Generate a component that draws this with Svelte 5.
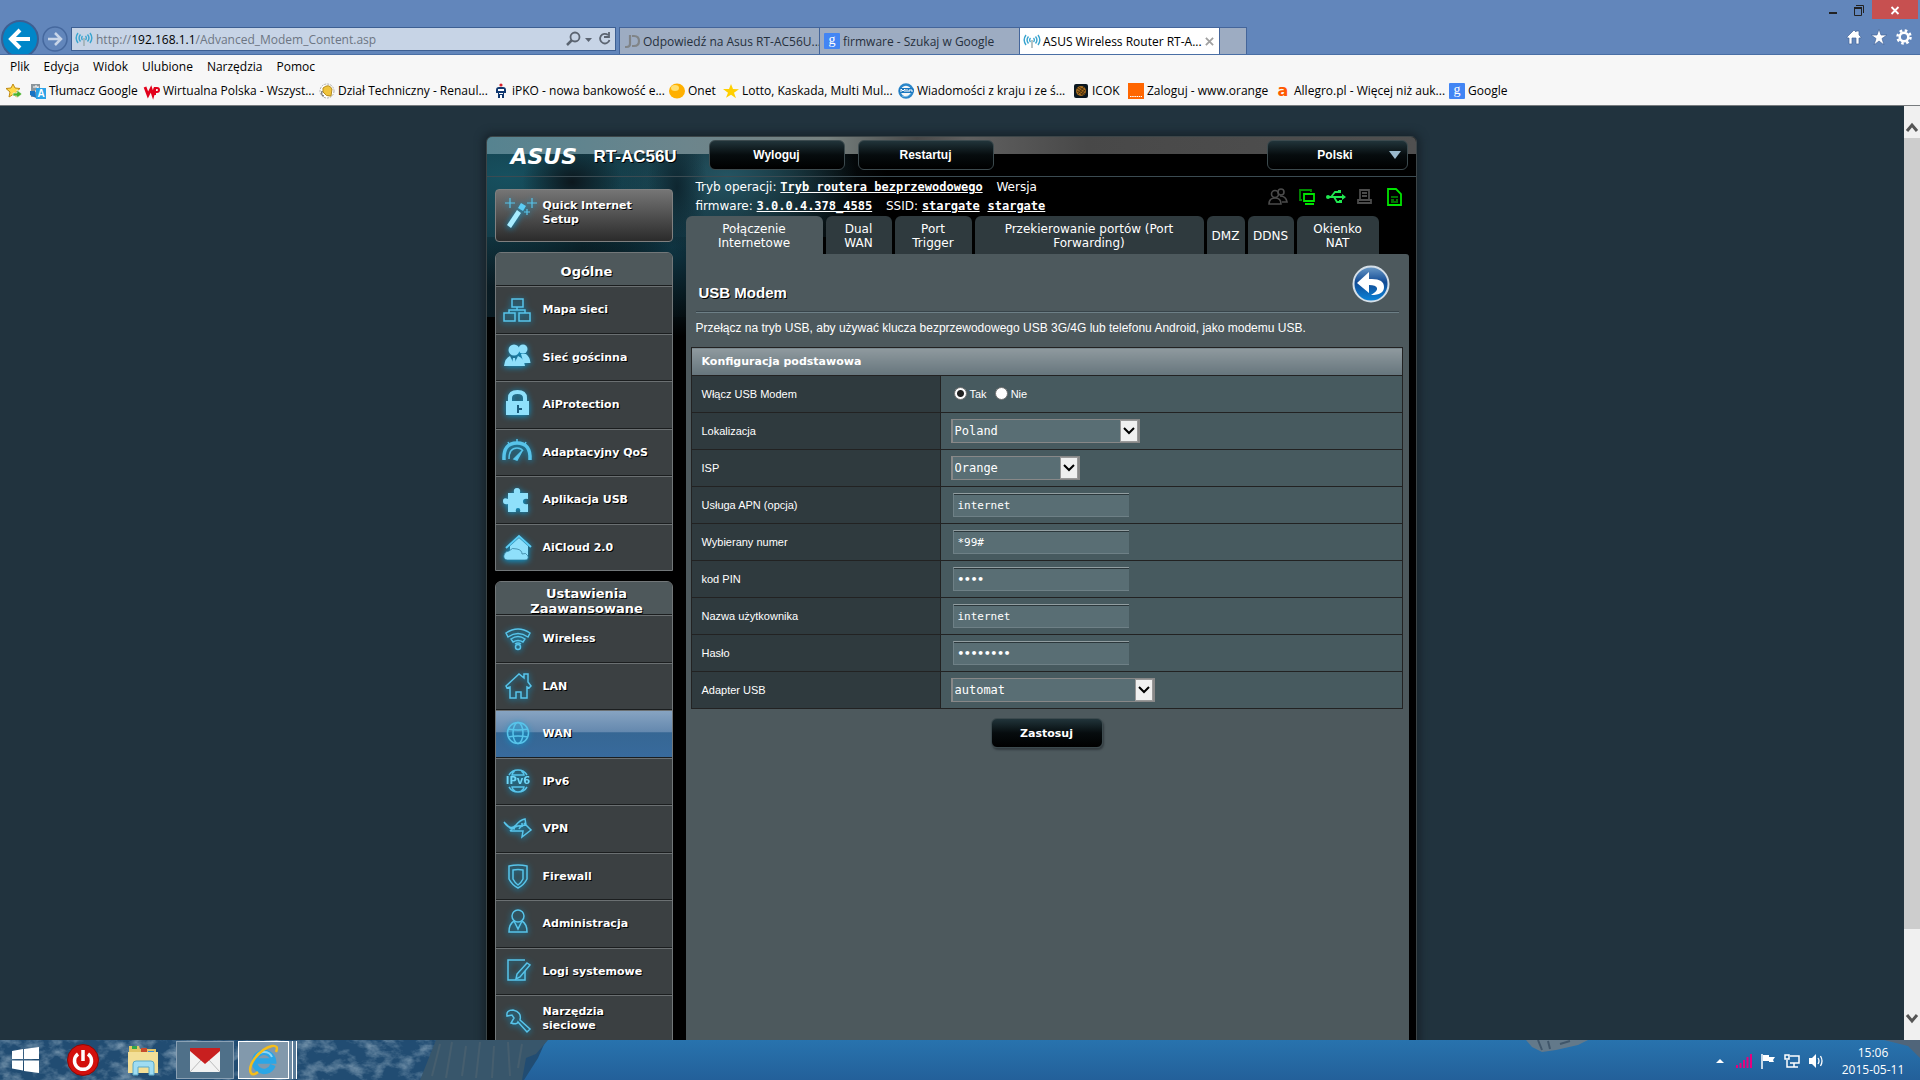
<script>
  let enabled = "yes";
  let location = "Poland";
  let isp = "Orange";
  let adapter = "automat";
  let apn = "internet";
  let dialNumber = "*99#";
  let pin = "1234";
  let user = "internet";
  let password = "internet";

  const asusFavicon =
    '<g fill="none" stroke="#3aa5d0" stroke-width="1.4"><path d="M4.500 3.500a5.500 5.500 0 0 0 0 7M2 2a8.500 8.500 0 0 0 0 10M11.500 3.500a5.500 5.500 0 0 1 0 7M14 2a8.500 8.500 0 0 1 0 10M6.500 5a2.800 2.800 0 0 0 0 4M9.500 5a2.800 2.800 0 0 1 0 4"/></g><path d="M7.300 7h1.400v8H7.300z" fill="#9aa"/>';
  const googleFavicon =
    '<rect width="16" height="16" rx="1" fill="#4285f4"/><text x="8" y="11" text-anchor="middle" font-family="Liberation Serif, serif" font-size="14" fill="#fff">g</text>';

  const menu = ["Plik", "Edycja", "Widok", "Ulubione", "Narzędzia", "Pomoc"];

  const browserTabs = [
    {
      title: "Odpowiedź na Asus RT-AC56U...",
      icon: '<g fill="none" stroke="#808487" stroke-width="2.200"><path d="M6 2v9q0 3-3.500 3H1M8 3h2q5 0 5 5t-5 5H8"/></g>',
    },
    { title: "firmware - Szukaj w Google", icon: googleFavicon },
    { title: "ASUS Wireless Router RT-A...", icon: asusFavicon, active: true },
  ];

  const favourites = [
    {
      title: "Tłumacz Google",
      icon: '<path d="M1 1h9v13H1z" fill="#8b959b"/><path d="M3 4h6M6 2v2M8 4q-1 4-5 6" stroke="#fff" fill="none"/><rect x="6" y="5" width="10" height="11" fill="#2ba3e8"/><path d="M0 8l5 0 1 7-6-3z" fill="#1673c4"/><text x="11" y="14" text-anchor="middle" font-family="Liberation Sans, sans-serif" font-weight="bold" font-size="10" fill="#fff">A</text>',
    },
    {
      title: "Wirtualna Polska - Wszyst...",
      icon: '<path d="M1 4l3 8 3-6 2 6 2-7" fill="none" stroke="#e2001a" stroke-width="2.800"/><path d="M11 12V5h2q2 0 2 2t-2 2h-2" fill="none" stroke="#e2001a" stroke-width="2"/>',
    },
    {
      title: "Dział Techniczny - Renaul...",
      icon: '<circle cx="8" cy="8" r="7" fill="#fff" stroke="#aaa" stroke-dasharray="2 1"/><path d="M4 5q6-5 9 1l-1 7q-5 1-8-4z" fill="#f0c43c" stroke="#b38b20"/><path d="M3 8q-1 5 2 5" stroke="#444" fill="none"/>',
    },
    {
      title: "iPKO - nowa bankowość e...",
      icon: '<circle cx="8" cy="2" r="1.600" fill="#d8202a"/><path d="M3 7q0-3 3-3h4q3 0 3 3v3h-2v5H5v-5H3z" fill="#10386f"/><path d="M5 6h6v2H5zM6 10h4v1H6zM7 12h2v3H7z" fill="#fff"/>',
    },
    {
      title: "Onet",
      icon: '<ellipse cx="8" cy="8" rx="8" ry="7.500" fill="#ffb000"/><ellipse cx="6" cy="5" rx="4" ry="3" fill="#ffdf70"/>',
    },
    {
      title: "Lotto, Kaskada, Multi Mul...",
      icon: '<path d="M8 1l2 5 6 .3-5 3.500 2 5.500-5-3.500-5 3 2-5L0 6l6 0z" fill="#ffcf00"/>',
    },
    {
      title: "Wiadomości z kraju i ze ś...",
      icon: '<circle cx="8" cy="8" r="6.500" fill="none" stroke="#2b86c9" stroke-width="2.500"/><rect x="1" y="5" width="15" height="5" rx="2" fill="#1a76be"/><path d="M3 9V6l2 2 2-2v3M9 6v3M11 9V7h3v2" stroke="#fff" fill="none"/><path d="M4 13q6 2 9-3" stroke="#7fbfe8" fill="none"/>',
    },
    {
      title: "ICOK",
      icon: '<rect x="1" y="1" width="14" height="14" rx="2" fill="#0b1720"/><circle cx="8" cy="8" r="5" fill="#a36a1d"/><path d="M4 5l8 6M4 8l7 4M6 4l6 4M5 11l6-7M8 12l4-5" stroke="#3a2408" stroke-width=".8"/>',
    },
    {
      title: "Zaloguj - www.orange",
      icon: '<rect width="16" height="16" fill="#ff6600"/><path d="M2 13.500h12" stroke="#fff" stroke-dasharray="1.500 .7"/>',
    },
    {
      title: "Allegro.pl - Więcej niż auk...",
      icon: '<text x="8" y="13" text-anchor="middle" font-family="DejaVu Sans, sans-serif" font-weight="bold" font-size="16" fill="#ff5a00">a</text>',
    },
    { title: "Google", icon: googleFavicon },
  ];

  const general = [
    {
      label: "Mapa sieci",
      icon: '<path d="M11 5h11v8H11zM3 19h11v8H3zM18 19h11v8H18zM16 13v3M8 19v-3h16v3"/>',
    },
    {
      label: "Sieć gościnna",
      solid: true,
      icon: '<circle cx="22" cy="7" r="4.500"/><path d="M20 12h5q4 3 4.500 9h-7z"/><circle cx="13" cy="8" r="5.500"/><path d="M3 24q1-8 6-10l4 8 4-8q6 2 7 10z"/><path d="M12 16h2l1 7h-4z"/>',
    },
    {
      label: "AiProtection",
      solid: true,
      icon: '<path d="M7 12v-3q0-8 9.500-8T26 9v3h2v14H5V12zm4 0h11v-3q0-4-5.500-4T11 9z"/><path d="M16 16h2v3h3v2h-3v3h-2z" fill="#1a5c7d"/>',
    },
    {
      label: "Adaptacyjny QoS",
      icon: '<path d="M3 23Q2 6 16 6t13 17" stroke-width="3.500"/><path d="M8 22q0-11 8-11 4 0 6 3" stroke-width="1.500"/><path d="M13 22l8-8-5 9z" fill="#5ccdf5"/><path d="M16 2v3M7 5l1 2M25 5l-1 2" stroke-width="1.500"/>',
    },
    {
      label: "Aplikacja USB",
      solid: true,
      icon: '<path d="M7 9h6q-1-5 3-5t3 5h8v6q-5-1-5 2.500t5 2.500v8h-8q1-4-2-4t-2 4H7v-8q-5 1-5-3t5-2z"/>',
    },
    {
      label: "AiCloud 2.0",
      solid: true,
      icon: '<path d="M9 17v-3l9-8 9 8v11H9z"/><path d="M5 16L18 4l12 11" fill="none" stroke="#5ccdf5" stroke-width="2"/><path d="M6 28q-4-1-3-5 1-4 5-4 3-4 8-2 5 1 5 5 4-2 6 2 1 4-3 4z" stroke="#2a7392" stroke-width=".7"/>',
    },
  ];

  const advanced = [
    {
      label: "Wireless",
      icon: '<path d="M5 10q12-8 24 0l-2 4q-10-7-20 0zM10 16q7-5 14 0l-2 3q-5-3-10 0zM14 21q3-2 6 0"/><circle cx="17" cy="24" r="2.500"/>',
    },
    {
      label: "LAN",
      icon: '<path d="M5 15L18 3l5 4V3h4v8l3 4-2 2-2-1v11h-6v-6h-5v6H9V16l-3 1z"/>',
    },
    {
      label: "WAN",
      active: true,
      icon: '<circle cx="17" cy="15" r="10.500"/><ellipse cx="17" cy="15" rx="5" ry="10.500"/><path d="M7 11q10 2 20 0M7 19q10-2 20 0"/>',
    },
    {
      label: "IPv6",
      icon: '<path d="M8 9q3-5 9-5t9 5M8 21q3 5 9 5t9-5M14 5q-3 2-3 4h12q0-2-3-4M14 25q-3-2-3-4h12q0 2-3 4"/><text x="17" y="18" text-anchor="middle" font-family="DejaVu Sans, sans-serif" font-size="10" fill="#6fd6f7" stroke="none">IPv6</text>',
    },
    {
      label: "VPN",
      icon: '<path d="M3 9q6 9 12 3 4-5 9-6l1 6q-5 0-7 4M9 18q6-6 12-5v-3M9 18l13 0-1 6 9-7-7-7M3 9l6 6 5 1"/>',
    },
    {
      label: "Firewall",
      icon: '<path d="M8 5q9-2 18 0v13q-3 6-9 9-6-3-9-9z"/><path d="M12 9q5-1 10 0v9q-2 4-5 6-3-2-5-6z"/>',
    },
    {
      label: "Administracja",
      icon: '<circle cx="17" cy="8" r="6"/><path d="M13 13q-5 3-5 11h18q0-8-5-11l-4 8z"/>',
    },
    {
      label: "Logi systemowe",
      icon: '<path d="M24 4H7v20h17v-9"/><path d="M26 7l3 2-10 12-4 2 1-5z"/>',
    },
    {
      label: "Narzędzia sieciowe",
      icon: '<path d="M12 7q-7 0-6 6l5-1 2 3-3 5q6 2 7-1l9 10 3-3-10-9q2-8-7-10z"/>',
    },
  ];

  const pageTabs = [
    { label: "Połączenie Internetowe", width: 137, active: true },
    { label: "Dual WAN", width: 66 },
    { label: "Port Trigger", width: 77 },
    { label: "Przekierowanie portów (Port Forwarding)", width: 229 },
    { label: "DMZ", width: 38 },
    { label: "DDNS", width: 46 },
    { label: "Okienko NAT", width: 82 },
  ];
</script>

{#snippet sideGroup(title, items)}
  <section class="side-group">
    <h2><span>{title}</span></h2>
    <ul>
      {#each items as item}
        <li class:active={item.active}>
          <a href="#menu">
            <svg class="side-icon" class:solid={item.solid} viewBox="0 0 32 32">{@html item.icon}</svg>
            <span>{item.label}</span>
          </a>
        </li>
      {/each}
    </ul>
  </section>
{/snippet}

{#snippet chevron()}
  <span class="select-arrow">
    <svg viewBox="0 0 16 20"><path d="M3 7l5 5 5-5" fill="none" stroke="#000" stroke-width="2" /></svg>
  </span>
{/snippet}

<div class="screen">
  <!-- browser window -->
  <header class="chrome">
    <div class="window-buttons">
      <button aria-label="Minimalizuj"><svg viewBox="0 0 16 16"><path d="M4 10h8v2H4z" fill="#222" /></svg></button>
      <button aria-label="Przywróć"><svg viewBox="0 0 16 16"><path d="M3.500 5.500h7v8h-7zM5 3.500h7.500V11" fill="none" stroke="#222" /><path d="M3 5h8v2H3z" fill="#222" /></svg></button>
      <button class="close" aria-label="Zamknij"><svg viewBox="0 0 16 16"><path d="M4.500 5l7 7M11.500 5l-7 7" stroke="#fff" stroke-width="1.800" /></svg></button>
    </div>
    <div class="nav-row">
      <button class="back" aria-label="Wstecz"><svg viewBox="0 0 38 38"><circle cx="19" cy="19" r="18" fill="#0086c8" stroke="#3d5f92" stroke-width="2" /><path d="M29 19H12M19 10l-9 9 9 9" fill="none" stroke="#fff" stroke-width="4" /></svg></button>
      <button class="forward" aria-label="Dalej"><svg viewBox="0 0 26 26"><circle cx="13" cy="13" r="12" fill="none" stroke="#45689e" stroke-width="1.500" /><path d="M6 13h12M13 7l6 6-6 6" fill="none" stroke="#c8d5e8" stroke-width="2.500" /></svg></button>
      <div class="address">
        <svg class="icon16" viewBox="0 0 16 16">{@html asusFavicon}</svg>
        <span class="url">http://<b>192.168.1.1</b>/Advanced_Modem_Content.asp</span>
        <svg class="address-tools" viewBox="0 0 46 20"><circle cx="10" cy="8" r="4.500" fill="none" stroke="#5b6471" stroke-width="1.800" /><path d="M7 11l-5 5" stroke="#5b6471" stroke-width="2.500" /><path d="M20 9h7l-3.500 4z" fill="#5b6471" /><path d="M43 6a4.800 4.800 0 1 0 1.500 5M44 3v5h-5" fill="none" stroke="#5b6471" stroke-width="1.800" /></svg>
      </div>
      <div class="browser-tabs">
        {#each browserTabs as tab}
          <button class="browser-tab" class:active={tab.active}>
            <svg class="icon16" viewBox="0 0 16 16">{@html tab.icon}</svg>
            <span>{tab.title}</span>
            {#if tab.active}
              <svg class="tab-close" viewBox="0 0 10 10"><path d="M1 1l8 8M9 1L1 9" stroke="#a0a0a0" stroke-width="2" /></svg>
            {/if}
          </button>
        {/each}
        <button class="new-tab" aria-label="Nowa karta"></button>
      </div>
      <div class="chrome-tools">
        <svg viewBox="0 0 16 16"><path d="M1 8l7-7 2 2V2h3v4l2 2v1h-2v6h-3V9H6v6H3V9H1z" fill="#fff" stroke="#46669a" stroke-width=".7" /></svg>
        <svg viewBox="0 0 16 16"><path d="M8 0l2 6h6l-5 3.500 2 6.500-5-4-5 4 2-6.500L0 6h6z" fill="#fff" stroke="#46669a" stroke-width=".7" /></svg>
        <svg viewBox="0 0 16 16"><circle cx="8" cy="8" r="6.500" fill="none" stroke="#fff" stroke-width="2.500" stroke-dasharray="2.550 2.550" /><circle cx="8" cy="8" r="4.300" fill="none" stroke="#fff" stroke-width="2.500" /></svg>
      </div>
    </div>
  </header>

  <nav class="menu-bar">
    {#each menu as entry}
      <a href="#menu">{entry}</a>
    {/each}
  </nav>

  <nav class="favourites">
    <button class="add-favourite" aria-label="Dodaj do ulubionych">
      <svg class="icon16" viewBox="0 0 16 16"><path d="M7 1l2 4 5 .5-4 3.500 1 5-4-2.500L3 14l1-5L0 5.500 5 5z" fill="#ffd94a" stroke="#c08a10" /><path d="M7 10h4V7l5 4-5 4v-2H7z" fill="#48b02c" stroke="#fff" stroke-width=".6" /></svg>
    </button>
    {#each favourites as site}
      <a href="#site">
        <svg class="icon16" viewBox="0 0 16 16">{@html site.icon}</svg>
        <span>{site.title}</span>
      </a>
    {/each}
  </nav>

  <!-- router page -->
  <div class="viewport">
    <main class="page">
      <div class="router">
        <header class="router-header">
          <div class="brand">ASUS</div>
          <a class="model" href="#home">RT-AC56U</a>
          <button class="pill">Wyloguj</button>
          <button class="pill">Restartuj</button>
          <button class="pill language">
            <span>Polski</span>
            <svg viewBox="0 0 12 8"><path d="M0 0h12L6 8z" fill="#9ab8cc" /></svg>
          </button>
        </header>

        <div class="router-body">
          <aside class="sidebar">
            <button class="quick-setup">
              <svg class="side-icon" viewBox="0 0 32 32"><path d="M2 28L12 13l4 3L6 31z" fill="#a8ecff" stroke="none" /><path d="M13 11l3-5 5 3-3 5z" fill="#5ccdf5" stroke="none" /><path d="M5 1v10M0 6h10M27 1v10M22 6h10M22 12v6M19 15h6" stroke-width="1.200" /></svg>
              <span>Quick Internet Setup</span>
            </button>
            {@render sideGroup("Ogólne", general)}
            {@render sideGroup("Ustawienia Zaawansowane", advanced)}
          </aside>

          <div class="content">
            <div class="status-bar">
              <div class="status-text">
                <p><span>Tryb operacji:</span> <a href="#mode">Tryb routera bezprzewodowego</a> <span class="spaced">Wersja</span></p>
                <p><span>firmware:</span> <a href="#fw">3.0.0.4.378_4585</a> <span class="spaced">SSID:</span> <a href="#ssid">stargate</a> <a class="second" href="#ssid5">stargate</a></p>
              </div>
              <div class="status-icons">
                <svg viewBox="0 0 20 18" fill="none" stroke="#4b4b4b" stroke-width="1.600"><circle cx="7" cy="6" r="3.500" /><path d="M1 16q0-6 6-6t6 6z" /><circle cx="13" cy="4" r="3" /><path d="M12 8q6 0 7 6h-5" /></svg>
                <svg viewBox="0 0 20 18" fill="none" stroke="#00e400" stroke-width="1.800"><path d="M5 12H3V2h11v2" stroke="#008c00" /><path d="M7 6h10v7H7zM8 16h9" /></svg>
                <svg viewBox="0 0 20 18" fill="none" stroke="#20e850" stroke-width="1.800"><path d="M1 9h15M5 9l4-5h4M8 9l3 5h3" /><path d="M16 6l4 3-4 3zM12 2h3v3h-3zM13 12h3v3h-3z" fill="#20e850" stroke="none" /><circle cx="2" cy="9" r="2" fill="#20e850" stroke="none" /></svg>
                <svg viewBox="0 0 20 18" fill="none" stroke="#4b4b4b" stroke-width="1.800"><path d="M5 11V2h9v9M7 5h5M7 8h5M3 12h13v3H3z" /></svg>
                <svg viewBox="0 0 20 18" fill="none" stroke="#00e400" stroke-width="1.800"><path d="M4 1h8l5 5v11H4z" /><path d="M7 9h7M7 12h3M12 12h2M7 14h7" stroke-width="1.200" /></svg>
              </div>
            </div>

            <nav class="page-tabs">
              {#each pageTabs as tab}
                <a href="#tab" class:active={tab.active} style="flex-basis: {tab.width}px"><span>{tab.label}</span></a>
              {/each}
            </nav>

            <div class="panel">
              <div class="panel-title">
                <h1>USB Modem</h1>
                <button class="return" aria-label="Wróć">
                  <svg viewBox="0 0 38 38">
                    <defs><linearGradient id="blueBall" x1="0" y1="0" x2="0" y2="1"><stop offset="0" stop-color="#6d9cc8" /><stop offset=".45" stop-color="#114a94" /><stop offset="1" stop-color="#0b86dc" /></linearGradient></defs>
                    <circle cx="19" cy="19" r="17.500" fill="url(#blueBall)" stroke="#d5dfe8" stroke-width="2" />
                    <path d="M5 18L17 7v7q15-1 15 8 0 8-13 8 7-4 6-7-1-3-8-3v8z" fill="#fff" />
                  </svg>
                </button>
              </div>
              <p class="description">Przełącz na tryb USB, aby używać klucza bezprzewodowego USB 3G/4G lub telefonu Android, jako modemu USB.</p>

              <table>
                <thead>
                  <tr><th colspan="2">Konfiguracja podstawowa</th></tr>
                </thead>
                <tbody>
                  <tr>
                    <th>Włącz USB Modem</th>
                    <td>
                      <div class="radios">
                        <input id="modem-yes" type="radio" bind:group={enabled} value="yes" /><label for="modem-yes">Tak</label>
                        <input id="modem-no" type="radio" bind:group={enabled} value="no" /><label for="modem-no">Nie</label>
                      </div>
                    </td>
                  </tr>
                  <tr>
                    <th><label for="location">Lokalizacja</label></th>
                    <td>
                      <div class="select wide">
                        <select id="location" bind:value={location}><option>Poland</option></select>
                        {@render chevron()}
                      </div>
                    </td>
                  </tr>
                  <tr>
                    <th><label for="isp">ISP</label></th>
                    <td>
                      <div class="select narrow">
                        <select id="isp" bind:value={isp}><option>Orange</option></select>
                        {@render chevron()}
                      </div>
                    </td>
                  </tr>
                  <tr>
                    <th><label for="apn">Usługa APN (opcja)</label></th>
                    <td><input id="apn" class="text" type="text" bind:value={apn} /></td>
                  </tr>
                  <tr>
                    <th><label for="dial">Wybierany numer</label></th>
                    <td><input id="dial" class="text" type="text" bind:value={dialNumber} /></td>
                  </tr>
                  <tr>
                    <th><label for="pin">kod PIN</label></th>
                    <td><input id="pin" class="text" type="password" bind:value={pin} /></td>
                  </tr>
                  <tr>
                    <th><label for="user">Nazwa użytkownika</label></th>
                    <td><input id="user" class="text" type="text" bind:value={user} /></td>
                  </tr>
                  <tr>
                    <th><label for="password">Hasło</label></th>
                    <td><input id="password" class="text" type="password" bind:value={password} /></td>
                  </tr>
                  <tr>
                    <th><label for="adapter">Adapter USB</label></th>
                    <td>
                      <div class="select widest">
                        <select id="adapter" bind:value={adapter}><option>automat</option></select>
                        {@render chevron()}
                      </div>
                    </td>
                  </tr>
                </tbody>
              </table>

              <button class="pill apply">Zastosuj</button>
            </div>
          </div>
        </div>
      </div>
    </main>

    <div class="scrollbar">
      <svg viewBox="0 0 16 32"><path d="M3 25l5-6 5 6" fill="none" stroke="#555" stroke-width="3" /></svg>
      <div class="thumb"></div>
      <svg viewBox="0 0 16 32"><path d="M3 7l5 6 5-6" fill="none" stroke="#555" stroke-width="3" /></svg>
    </div>
  </div>

  <!-- system taskbar -->
  <footer class="taskbar">
    <svg class="wallpaper" viewBox="0 0 1920 40" preserveAspectRatio="none">
      <defs>
        <linearGradient id="sea" x1="0" x2="0" y1="0" y2="1"><stop offset="0" stop-color="#2873ae" /><stop offset="1" stop-color="#23609a" /></linearGradient>
        <filter id="rough" x="0" y="0" width="100%" height="100%">
          <feTurbulence type="fractalNoise" baseFrequency="0.06 0.09" numOctaves="4" seed="7" />
          <feColorMatrix values="0 0 0 0 .42  0 0 0 0 .55  0 0 0 0 .65  2.4 0 0 0 -1.050" />
        </filter>
      </defs>
      <rect width="1920" height="40" fill="url(#sea)" />
      <path d="M0 0h546l-8 18-14 22H0z" fill="#214c72" />
      <path d="M0 0h440l-22 40H0z" filter="url(#rough)" opacity=".6" />
      <path d="M436 0h112l-12 14-10 4-4 22H420z" fill="#38566b" />
      <path d="M440 4l-8 32M452 2l-6 36M466 6l-4 30M480 2l-4 36M494 6l-2 32M508 2l2 34M522 4l-4 24" stroke="#4d6270" stroke-width="2" opacity=".7" />
      <path d="M1526 0h62l-10 5-22 5-14 2-10-5z" fill="#63798a" />
      <path d="M1538 0l4 10M1548 1l2 8M1560 4l10-3" stroke="#40566a" stroke-width="2" />
      <path d="M1884 0h36v18l-12-12z" fill="#50657a" />
    </svg>
    <div class="apps">
      <button class="start" aria-label="Start"><svg viewBox="0 0 27 26"><path d="M0 4l11-2v10H0zM12 2l15-2v12H12zM0 13.500h11v10l-11-2zM12 13.500h15V26l-15-2z" fill="#fff" /></svg></button>
      <button class="app" aria-label="Zasilanie"><svg viewBox="0 0 32 32"><circle cx="16" cy="16" r="15.500" fill="#d3100c" stroke="#8a0a08" /><path d="M11 10a8.500 8.500 0 1 0 10 0M16 6v11" fill="none" stroke="#fff" stroke-width="3.500" /></svg></button>
      <button class="app" aria-label="Eksplorator plików"><svg viewBox="0 0 32 32"><path d="M2 6V2h10l1 3h16v23H2z" fill="#e3c568" /><path d="M5 2h5v3H5z" fill="#2fa84a" /><path d="M14 4h6v4h-6z" fill="#c74a2c" /><path d="M21 7h6v4h-6z" fill="#3b8fd8" /><path d="M1 8h30v21H1z" fill="#f3df97" /><path d="M6 31V20q0-3 3-3h15q3 0 3 3v11h-5v-8H11v8z" fill="#9fdcf2" stroke="#5aa9c8" /></svg></button>
      <button class="tile" aria-label="Poczta"><svg viewBox="0 0 32 26"><path d="M1 1h30v24H1z" fill="#f2f2f2" /><path d="M1 25l11-12M31 25L20 13" stroke="#bbb" fill="none" /><path d="M1 1h30v3L16 17 1 4z" fill="#c81f1f" /></svg></button>
      <button class="tile stacked" aria-label="Internet Explorer"><svg viewBox="0 0 34 34"><path d="M26 22a9.500 9.500 0 1 1 .5-4H10" fill="none" stroke="#2ba6e6" stroke-width="5.500" /><path d="M9 14q3-5 8-5 6 0 8 5" fill="none" stroke="#8bd6f7" stroke-width="2" /><path d="M29 9q3-7-4-6-9 2-17 12-7 10-4 15 2 3 7-1" fill="none" stroke="#f4bd1b" stroke-width="2.500" /></svg></button>
    </div>
    <div class="tray">
      <svg viewBox="0 0 16 16"><path d="M4 10h8L8 6z" fill="#fff" /></svg>
      <svg viewBox="0 0 16 16"><path d="M1 15v-3M4.500 15v-5M8 15V7M11.500 15V4M15 15V1" stroke="#e6007e" stroke-width="2" /></svg>
      <svg viewBox="0 0 16 16"><path d="M2 1v15" stroke="#fff" stroke-width="1.500" /><path d="M3 2h6v2h6l-2 3 1 2H9V8H3z" fill="#fff" /></svg>
      <svg viewBox="0 0 16 16"><path d="M6 3h9v7H6M10 10v4M7 14h7M3 7v7h4M1 2h4v4H1z" fill="none" stroke="#fff" stroke-width="1.500" /></svg>
      <svg viewBox="0 0 16 16"><path d="M1 5h3l4-4v14l-4-4H1z" fill="#fff" /><path d="M10 5q2 3 0 6M12.500 3q3 5 0 10" fill="none" stroke="#fff" stroke-width="1.300" /></svg>
      <div class="clock"><span>15:06</span><span>2015-05-11</span></div>
    </div>
  </footer>
</div>

<style>
  :global(body) {
    margin: 0;
    background: #21333e;
  }

  .screen {
    height: 100vh;
    display: flex;
    flex-direction: column;
    font-family: "Open Sans", "Noto Sans", sans-serif;
    font-size: 12px;
    color: #000;
    overflow: hidden;
  }

  .screen * {
    box-sizing: border-box;
  }

  button {
    font: inherit;
    color: inherit;
    border: 0;
    padding: 0;
    background: none;
  }

  a {
    color: inherit;
    text-decoration: none;
  }

  svg {
    display: block;
    flex: none;
  }

  .icon16 {
    width: 16px;
    height: 16px;
    overflow: visible;
  }

  /* Browser chrome */
  .chrome {
    flex: none;
    height: 55px;
    background: #6286bb;
    border-bottom: 1px solid #4a6fa5;
  }

  .window-buttons {
    height: 19px;
    display: flex;
    justify-content: flex-end;
    padding-right: 2px;
  }

  .window-buttons button {
    width: 26px;
    display: flex;
    align-items: center;
    justify-content: center;
  }

  .window-buttons svg {
    width: 16px;
    height: 16px;
  }

  .window-buttons .close {
    width: 46px;
    background: #c75050;
  }

  .nav-row {
    height: 35px;
    display: flex;
    align-items: center;
    padding-left: 1px;
    overflow: hidden;
  }

  .back,
  .back svg {
    width: 38px;
    height: 38px;
  }

  .back {
    margin-top: 4px;
  }

  .forward,
  .forward svg {
    width: 26px;
    height: 26px;
  }

  .forward {
    margin: 4px 3px 0;
  }

  .address {
    width: 545px;
    height: 24px;
    margin-top: 5px;
    display: flex;
    align-items: center;
    gap: 4px;
    padding: 0 4px;
    background: #c7d4e6;
    border: 1px solid #3d5f92;
  }

  .url {
    flex: 1;
    color: #6d7683;
  }

  .url b {
    font-weight: normal;
    color: #000;
  }

  .address-tools {
    width: 46px;
    height: 20px;
  }

  .browser-tabs {
    flex: 1;
    align-self: flex-end;
    height: 27px;
    display: flex;
    margin-left: 3px;
  }

  .browser-tab {
    width: 201px;
    margin-right: -1px;
    display: flex;
    align-items: center;
    gap: 3px;
    padding: 0 3px 0 4px;
    background: #9dacc2;
    border: 1px solid #44659a;
    border-bottom: 0;
    color: #26303d;
    white-space: nowrap;
  }

  .browser-tab.active {
    padding-right: 6px;
    background: #fff;
    color: #000;
  }

  .tab-close {
    width: 9px;
    height: 9px;
    margin-left: auto;
  }

  .new-tab {
    width: 28px;
    background: #9dacc2;
    border: 1px solid #44659a;
    border-bottom: 0;
  }

  .chrome-tools {
    display: flex;
    gap: 9px;
    padding-right: 8px;
  }

  .chrome-tools svg {
    width: 16px;
    height: 16px;
  }

  .menu-bar {
    flex: none;
    height: 23px;
    display: flex;
    align-items: center;
    gap: 14px;
    padding-left: 10px;
    background: #f7f7f7;
  }

  .favourites {
    flex: none;
    height: 28px;
    display: grid;
    grid-template-columns: 24px 114px 175px 174px 176px 54px 175px 175px 55px 147px 174px 60px;
    align-items: center;
    padding: 0 0 2px 6px;
    background: #f7f7f7;
    border-bottom: 1px solid #777b7e;
  }

  .favourites a {
    display: flex;
    align-items: center;
    gap: 3px;
    white-space: nowrap;
  }

  /* Router page */
  .viewport {
    flex: 1;
    min-height: 0;
    display: flex;
  }

  .page {
    flex: 1;
    display: flex;
    justify-content: center;
    align-items: flex-start;
    overflow: hidden;
    padding: 30px 2px 0 0;
    background: #21333e;
  }

  .router {
    width: 931px;
    max-width: 100%;
    border: 1px solid #3c4548;
    border-radius: 6px 6px 0 0;
    box-shadow: 0 0 8px 3px #17232b;
    background:
      radial-gradient(ellipse 50px 40px at 85px 45px, #0c171d 0%, transparent 100%),
      radial-gradient(ellipse 30px 70px at 190px 50px, #0e2630 0%, transparent 100%),
      radial-gradient(ellipse 200px 110px at 20px 40px, #17505f 0%, transparent 100%),
      radial-gradient(ellipse 130px 80px at 240px 40px, #245462 0%, transparent 100%),
      radial-gradient(ellipse 90px 90px at 185px 110px, #0f3543 0%, transparent 100%),
      linear-gradient(to right, #10303b 0, #12262d 250px, #000 400px) 0 0 / 100% 100px no-repeat,
      linear-gradient(to right, #0a1c24, #000 220px) 0 100px / 100% 80px no-repeat,
      #000;
    color: #fff;
    font-family: "DejaVu Sans", Verdana, sans-serif;
  }

  .router-header {
    height: 40px;
    display: flex;
    align-items: flex-start;
    padding: 3px 8px 0 24px;
    border-bottom: 1px solid #3b4b52;
    background: linear-gradient(to right, #568390, #6c858c 200px, #77817f 340px, #4a4a4a 430px, #606060 480px, #484848 600px, #505050) 0 0 / 100% 17px no-repeat;
    border-radius: 5px 5px 0 0;
  }

  .brand {
    width: 83px;
    font-size: 22px;
    line-height: 34px;
    font-weight: bold;
    font-style: oblique;
  }

  .model {
    width: 115px;
    font-family: "Liberation Sans", Arial, sans-serif;
    font-size: 17px;
    line-height: 34px;
    font-weight: bold;
    text-shadow: 1px 1px 0 #000;
  }

  .pill {
    width: 136px;
    height: 30px;
    margin-right: 13px;
    border: 1px solid #3c4a4e;
    border-radius: 6px;
    background: linear-gradient(#21343a, #060c0e 50%, #000);
    color: #fff;
    font-family: "Liberation Sans", Arial, sans-serif;
    font-size: 12px;
    font-weight: bold;
  }

  .language {
    width: 141px;
    margin: 0 0 0 auto;
    display: flex;
    align-items: center;
    padding-right: 6px;
  }

  .language span {
    flex: 1;
    padding-left: 14px;
  }

  .language svg {
    width: 12px;
    height: 8px;
  }

  .router-body {
    display: flex;
    gap: 13px;
    padding: 0 7px 0 8px;
  }

  /* Sidebar */
  .sidebar {
    width: 178px;
    flex: none;
    padding-top: 12px;
    font-size: 11px;
    line-height: 14px;
    font-weight: bold;
    text-shadow: 1px 1px 0 #000;
  }

  .quick-setup {
    width: 100%;
    height: 53px;
    display: flex;
    align-items: center;
    gap: 6px;
    padding: 0 20px 6px 9px;
    margin-bottom: 10px;
    border: 1px solid #808080;
    border-radius: 4px;
    background: linear-gradient(#757575, #2b2b2b);
    text-align: left;
    text-shadow: inherit;
  }

  .side-icon {
    width: 32px;
    height: 32px;
    fill: none;
    stroke: #58c4ea;
    stroke-width: 1.5;
    text-shadow: none;
    filter: drop-shadow(0 1px 3px #0a9ad2);
  }

  .side-icon.solid {
    fill: #8fe0fb;
    stroke: none;
  }

  .side-group {
    margin-bottom: 10px;
    border: 1px solid #727779;
    border-radius: 6px 6px 0 0;
    background: #3b4042;
  }

  .side-group h2 {
    height: 32px;
    margin: 0;
    padding: 5px 16px 0 22px;
    display: flex;
    align-items: center;
    justify-content: center;
    border-radius: 5px 5px 0 0;
    background: #4e585b;
    font-size: 13px;
    line-height: 15px;
    text-align: center;
  }

  .side-group ul {
    margin: 0;
    padding: 0;
    list-style: none;
  }

  .side-group li {
    height: 48px;
    border-top: 1px solid #1b1e1f;
  }

  .side-group li:nth-child(even) {
    height: 47px;
  }

  .side-group li a {
    height: 100%;
    display: flex;
    align-items: center;
    gap: 10px;
    padding: 0 40px 0 5px;
    border-top: 1px solid #6b7072;
  }

  .side-group li:not(:last-child) a {
    padding-right: 8px;
  }

  .side-group li.active a {
    background: linear-gradient(#87a4c2, #6488ae 46%, #366794 47%, #386a9c);
  }

  /* Content */
  .content {
    flex: 1;
    min-width: 0;
    display: flex;
    flex-direction: column;
    font-size: 12px;
  }

  .status-bar {
    height: 39px;
    display: flex;
    justify-content: space-between;
    padding: 1px 5px 0 10px;
  }

  .status-text p {
    margin: 0;
    line-height: 19px;
    white-space: nowrap;
  }

  .status-text a {
    font-family: "DejaVu Sans Mono", monospace;
    font-weight: bold;
    text-decoration: underline;
  }

  .status-text .spaced {
    margin-left: 10px;
  }

  .status-text .second {
    margin-left: 4px;
  }

  .status-icons {
    display: flex;
    align-items: center;
    gap: 9px;
    padding-bottom: 1px;
  }

  .status-icons svg {
    width: 20px;
    height: 18px;
  }

  .page-tabs {
    display: flex;
    gap: 3px;
    height: 38px;
  }

  .page-tabs a {
    flex: 0 1 auto;
    display: flex;
    align-items: center;
    justify-content: center;
    padding: 2px 8px 0;
    border-radius: 6px 6px 0 0;
    background: #2f3a3e;
    line-height: 14px;
    text-align: center;
  }

  .page-tabs a:nth-child(n + 5) {
    padding: 2px 0 0;
  }

  .page-tabs a:last-child {
    padding: 2px 12px 0;
  }

  .page-tabs a:first-child {
    padding: 2px 20px 0;
  }

  .page-tabs a.active {
    background: #4d595d;
  }

  .panel {
    flex: 1;
    padding: 0 6px 0 5px;
    border-radius: 0 3px 0 0;
    background: #4d595d;
    font-family: "Liberation Sans", Arial, sans-serif;
  }

  .panel-title {
    height: 59px;
    display: flex;
    justify-content: space-between;
    margin: 0 4px 0 5px;
    padding: 11px 9px 0 3px;
    border-bottom: 1px solid #6d7f86;
    box-shadow: inset 0 -1px 0 #38444a;
  }

  h1 {
    margin: 0;
    font-size: 15px;
    line-height: 56px;
    text-shadow: 1px 1px 0 #000;
  }

  .return,
  .return svg {
    width: 38px;
    height: 38px;
  }

  .description {
    margin: 7px 0 11px 5px;
    font-size: 12px;
    line-height: 16px;
  }

  table {
    width: 100%;
    border-collapse: collapse;
    font-size: 11px;
  }

  thead th {
    height: 28px;
    background: linear-gradient(#8f9a9f, #66757c);
    font-family: "DejaVu Sans", Verdana, sans-serif;
    font-size: 11px;
    font-weight: bold;
  }

  th,
  td {
    height: 37px;
    padding: 0 10px;
    border: 1px solid #222;
    text-align: left;
  }

  tbody th {
    width: 249px;
    background: #2f3a3e;
    font-weight: normal;
  }

  td {
    background: #475a5f;
  }

  .radios {
    display: flex;
    align-items: center;
    padding-left: 3px;
  }

  .radios input {
    appearance: none;
    width: 13px;
    height: 13px;
    margin: 0 3px 2px 0;
    border: 1px solid #707070;
    border-radius: 50%;
    background: #fff;
  }

  .radios input:checked {
    background: radial-gradient(circle, #222 0 3px, #fff 4px);
  }

  .radios label {
    margin-right: 8px;
  }

  .select {
    position: relative;
    height: 24px;
  }

  .select.wide {
    width: 189px;
  }

  .select.narrow {
    width: 129px;
  }

  .select.widest {
    width: 204px;
  }

  select {
    appearance: none;
    width: 100%;
    height: 100%;
    padding: 0 22px 0 2px;
    border: 1px solid #888;
    border-width: 1px 2px;
    border-radius: 0;
    background: #596e74;
    color: #fff;
    font-family: "DejaVu Sans Mono", monospace;
    font-size: 12px;
  }

  .select-arrow {
    position: absolute;
    top: 1px;
    right: 2px;
    width: 18px;
    height: 22px;
    background: #f0f0f0;
    border: 1px solid #999;
    pointer-events: none;
  }

  .select-arrow svg {
    width: 16px;
    height: 20px;
  }

  .text {
    display: block;
    width: 176px;
    height: 24px;
    margin-left: 2px;
    padding: 0 4px;
    border: 1px solid #6e8086;
    border-top-color: #929ea1;
    border-right: 0;
    box-shadow: inset 0 1px 0 #2b373b;
    background: #596e74;
    color: #fff;
    font-family: "DejaVu Sans Mono", monospace;
    font-size: 11px;
  }

  .text[type="password"] {
    font-weight: bold;
  }

  .apply {
    display: block;
    width: 112px;
    margin: 9px auto;
    font-family: "DejaVu Sans", Verdana, sans-serif;
    font-size: 11px;
    box-shadow: 1px 2px 2px #333c40;
  }

  .scrollbar {
    flex: none;
    width: 16px;
    display: flex;
    flex-direction: column;
    background: #f0f0f0;
  }

  .scrollbar svg {
    width: 16px;
    height: 32px;
  }

  .thumb {
    flex: 1;
    margin-bottom: 79px;
    background: #cdcdcd;
  }

  /* Taskbar */
  .taskbar {
    position: relative;
    flex: none;
    height: 40px;
    display: flex;
    justify-content: space-between;
    color: #fff;
  }

  .wallpaper {
    position: absolute;
    inset: 0;
    width: 100%;
    height: 100%;
  }

  .apps,
  .tray {
    position: relative;
    display: flex;
    align-items: center;
  }

  .apps {
    padding-left: 12px;
  }

  .start,
  .start svg {
    width: 27px;
    height: 26px;
  }

  .app,
  .app svg {
    width: 32px;
    height: 32px;
  }

  .app {
    margin-left: 28px;
  }

  .tile {
    width: 58px;
    height: 38px;
    display: flex;
    align-items: center;
    justify-content: center;
    margin-left: 17px;
    border: 1px solid #8ba1b4;
    background: #4f7089;
  }

  .tile svg {
    width: 32px;
    height: 26px;
  }

  .stacked {
    width: 51px;
    margin-left: 4px;
    border-color: #fff;
    background: #8299ac;
    box-shadow: 3px 0 0 #6d8aa3, 4px 0 0 #fff, 7px 0 0 #5a7b98, 8px 0 0 #fff;
  }

  .stacked svg {
    width: 34px;
    height: 34px;
  }

  .tray {
    gap: 8px;
    padding: 1px 14px 0 0;
  }

  .tray svg {
    width: 16px;
    height: 16px;
  }

  .clock {
    width: 66px;
    margin-left: 8px;
    display: flex;
    flex-direction: column;
    align-items: center;
    line-height: 17px;
    white-space: nowrap;
  }
</style>
